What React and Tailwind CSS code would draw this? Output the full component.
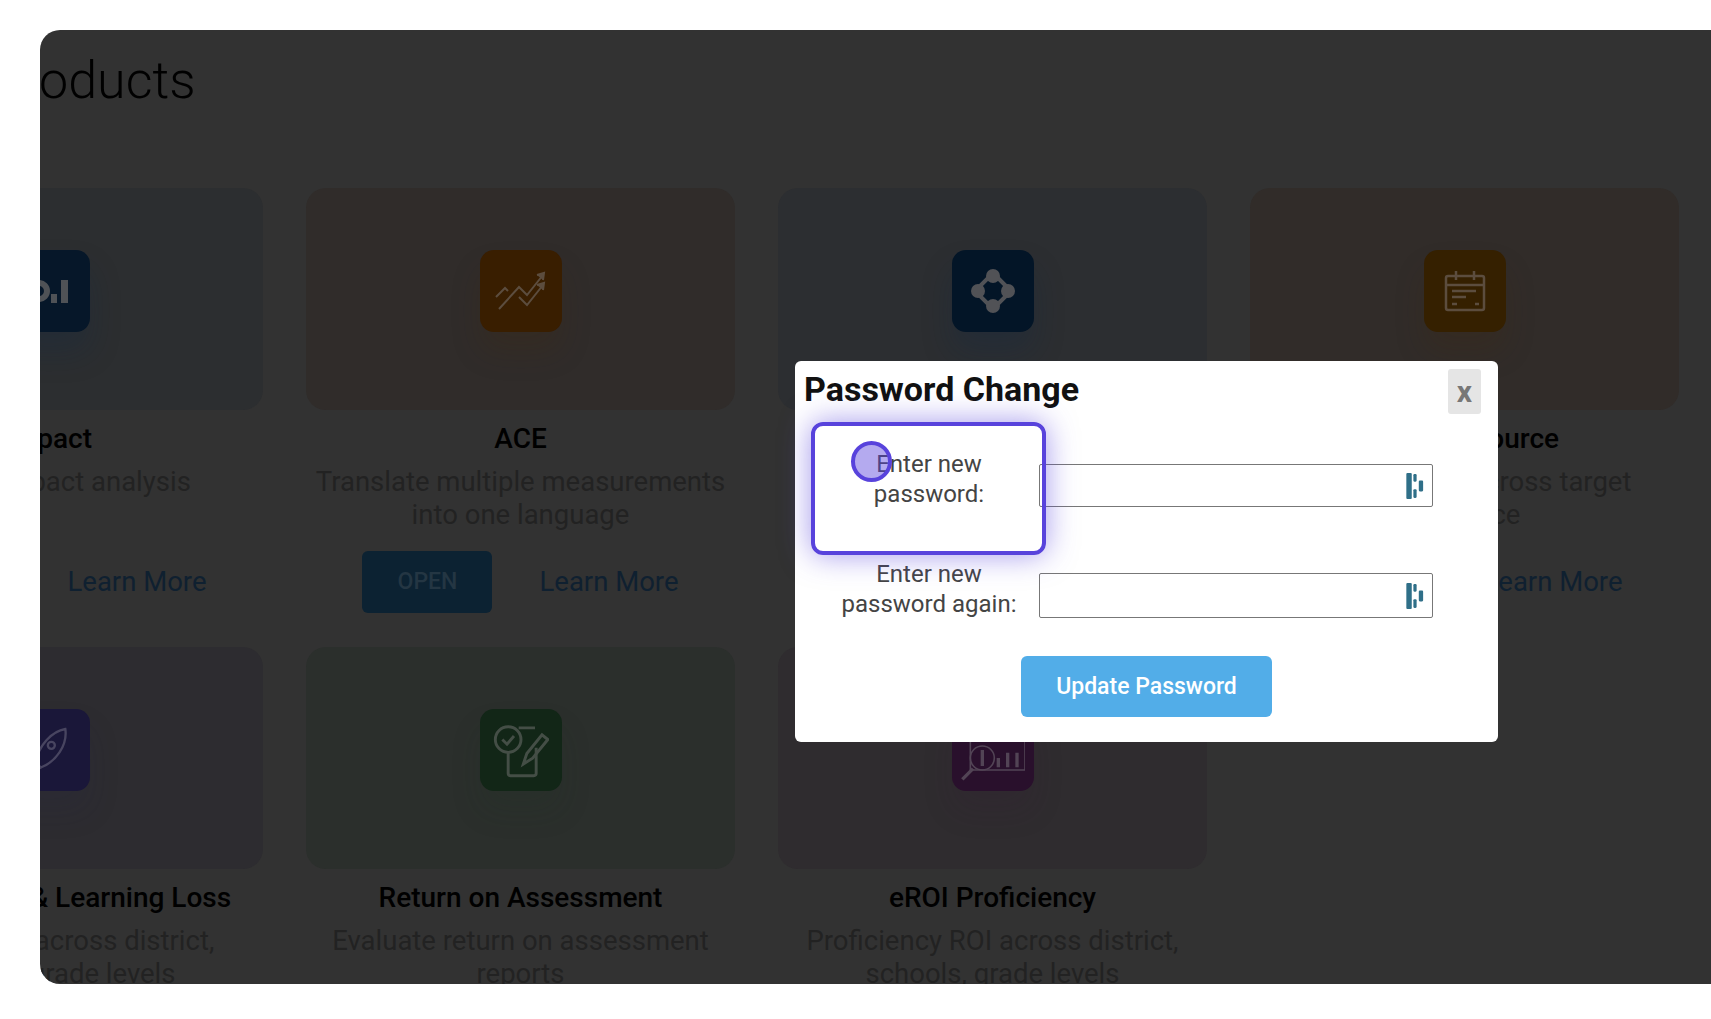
import React from 'react';

function ChartIcon() {
  return (
    <svg viewBox="0 0 48 48" className="h-12 w-12" fill="#4f5256">
      <circle cx="14" cy="24" r="8" fill="none" stroke="#4f5256" strokeWidth="6" />
      <rect x="26" y="27" width="6" height="9" />
      <rect x="36" y="13" width="7" height="23" />
    </svg>
  );
}

function TrendIcon() {
  return (
    <svg viewBox="0 0 56 48" className="h-12 w-14" fill="none" stroke="#5c4d3e" strokeWidth="2">
      <path d="M3 30l9-9 3 3" />
      <path d="M6 42l20-22 8 8 16-20" />
      <path d="M44 8l7-2-1 7" fill="#5c4d3e" />
      <path d="M26 30l8 8 16-20" />
      <path d="M44 18l7-2-1 7" fill="#5c4d3e" />
    </svg>
  );
}

function NodesIcon() {
  return (
    <svg viewBox="0 0 48 48" className="h-12 w-12" fill="#515256">
      <path d="M24 6L42 24 24 42 6 24Z" fill="none" stroke="#515256" strokeWidth="4" />
      <circle cx="24" cy="9" r="7" />
      <circle cx="39" cy="24" r="7" />
      <circle cx="24" cy="39" r="7" />
      <circle cx="9" cy="24" r="7" />
    </svg>
  );
}

function CalendarIcon() {
  return (
    <svg viewBox="0 0 48 48" className="h-12 w-12" fill="none" stroke="#5c4d3e" strokeWidth="2.5">
      <rect x="5" y="9" width="38" height="34" rx="2" />
      <path d="M5 18h38M15 4v9M33 4v9" />
      <path d="M11 24h24M11 30h14M11 37h5M34 37h4" />
    </svg>
  );
}

function RocketIcon() {
  return (
    <svg viewBox="0 0 48 48" className="h-14 w-14" fill="none" stroke="#484560" strokeWidth="2">
      <path d="M38 6C26 8 16 20 12 34l5 5C30 34 40 20 38 6Z" />
      <circle cx="26" cy="20" r="3" />
      <path d="M12 34l-5 8 3 1 7-4" />
    </svg>
  );
}

function CheckPenIcon() {
  return (
    <svg viewBox="0 0 48 48" className="h-14 w-14" fill="none" stroke="#444e46" strokeWidth="2.5">
      <circle cx="13" cy="15" r="11" />
      <path d="M8 15l4 4 6-7" />
      <path d="M13 26v18a2 2 0 002 2h20a2 2 0 002-2V22M22 5h14" />
      <path d="M26 36l3-9 13-16 5 4-13 16Z" />
    </svg>
  );
}

function ProficiencyIcon() {
  return (
    <svg viewBox="0 0 48 48" className="h-16 w-16" fill="none" stroke="#524455" strokeWidth="1.2">
      <path d="M7 10v29h41V10" />
      <circle cx="16" cy="30" r="9" />
      <path d="M9 38L1 46" strokeWidth="2.5" />
      <path d="M16 24v12M28 30v7M35 26v11M42 26v11" strokeWidth="2.5" />
    </svg>
  );
}

function VaultIcon() {
  return (
    <svg viewBox="0 0 16 24" className="h-[26px] w-[18px]" fill="#2f6f88">
      <rect x="0" y="0" width="5" height="24" rx="1" />
      <rect x="6.5" y="1" width="3" height="7" rx="1" />
      <rect x="6.5" y="15" width="3" height="8" rx="1" />
      <rect x="11.5" y="7" width="4" height="10" rx="1" />
    </svg>
  );
}

function ProductCard({ card, tile, shadow, icon, title, lines, open = true }) {
  return (
    <div className="flex flex-col items-center text-center">
      <div className={`flex h-[222px] w-full justify-center rounded-[20px] pt-[62px] ${card}`}>
        <div className={`flex h-[82px] w-[82px] items-center justify-center rounded-[14px] ${tile} ${shadow}`}>
          {icon}
        </div>
      </div>
      <div className="mt-[13px] h-8 text-[28px] leading-8 font-medium whitespace-nowrap text-black">{title}</div>
      <div className="mt-[10px] h-[66px] w-full text-[27.5px] leading-[33px] whitespace-nowrap text-[#222222]">
        {lines.map((line) => (
          <div key={line}>{line}</div>
        ))}
      </div>
      {open && (
        <div className="mt-[20px] flex items-center gap-[47px]">
          <button className="h-[62px] w-[130px] rounded-md bg-[#0c2232] text-[23px] font-medium text-[#243643]">OPEN</button>
          <span className="text-[27.5px] text-[#0f2030]">Learn More</span>
        </div>
      )}
    </div>
  );
}

export default function App() {
  return (
    <div className="relative h-[1019px] w-full overflow-hidden bg-white pt-[30px] pl-[40px] font-['Roboto',sans-serif]">
      <div className="h-[954px] overflow-hidden rounded-l-[20px] bg-[#323232]">
        <h1 className="-ml-[50px] pt-[21px] text-[52px] leading-[60px] font-light whitespace-nowrap text-black">Products</h1>
        <div className="-ml-[206px] mt-[77px] grid w-[1845px] grid-cols-[repeat(4,429px)] auto-rows-[459px] gap-x-[43px]">
          <ProductCard card="bg-[#2c2e30]" tile="bg-[#061729]" shadow="shadow-[0_20px_30px_rgba(10,40,70,0.25)]" icon={<ChartIcon />} title="Impact" lines={['Project impact analysis']} />
          <ProductCard card="bg-[#302c2a]" tile="bg-[#391e00]" shadow="shadow-[0_20px_30px_rgba(74,39,0,0.18)]" icon={<TrendIcon />} title="ACE" lines={['Translate multiple measurements', 'into one language']} />
          <ProductCard card="bg-[#2c2e31]" tile="bg-[#031527]" shadow="shadow-[0_20px_30px_rgba(10,40,70,0.25)]" icon={<NodesIcon />} title="" lines={[]} open={false} />
          <ProductCard card="bg-[#312c29]" tile="bg-[#352000]" shadow="shadow-[0_20px_30px_rgba(74,39,0,0.18)]" icon={<CalendarIcon />} title="Align Resource" lines={['Assess funds across target', 'guidance']} />
          <ProductCard card="bg-[#2d2c30]" tile="bg-[#1a1739]" shadow="shadow-[0_20px_30px_rgba(35,31,77,0.15)]" icon={<RocketIcon />} title="Acceleration & Learning Loss" lines={['Accelerated across district,', 'schools, grade levels']} />
          <ProductCard card="bg-[#2b2f2c]" tile="bg-[#122617]" shadow="shadow-[0_20px_30px_rgba(24,51,31,0.15)]" icon={<CheckPenIcon />} title="Return on Assessment" lines={['Evaluate return on assessment', 'reports']} />
          <ProductCard card="bg-[#2f2c2f]" tile="bg-[#29102c]" shadow="shadow-[0_20px_30px_rgba(55,21,57,0.15)]" icon={<ProficiencyIcon />} title="eROI Proficiency" lines={['Proficiency ROI across district,', 'schools, grade levels']} />
        </div>
      </div>

      {/* password dialog */}
      <div className="absolute top-[361px] left-[795px] h-[381px] w-[703px] rounded-md bg-white">
        <div className="flex items-start justify-between pt-[9px] pr-[17px] pl-[9px]">
          <h2 className="text-[34px] leading-[38px] font-bold text-[#111]">Password Change</h2>
          <button className="-mt-[1px] h-[45px] w-[33px] rounded-[3px] bg-[#e5e5e5] text-[30px] leading-[45px] font-bold text-[#777]">x</button>
        </div>
        <div className="mt-[36px] flex flex-col gap-[51px] pl-6">
          <div className="flex">
            <label className="h-[59px] w-[220px] text-center text-[24px] leading-[29.5px] text-[#444]">Enter new<br />password:</label>
            <div className="relative mt-[14px] h-[43px] w-[394px]">
              <input type="password" className="h-full w-full rounded-[2px] border border-[#777] bg-white" />
              <div className="absolute top-[9px] right-[9px]"><VaultIcon /></div>
            </div>
          </div>
          <div className="flex">
            <label className="h-[59px] w-[220px] text-center text-[24px] leading-[29.5px] text-[#444]">Enter new<br />password again:</label>
            <div className="relative mt-[13px] h-[45px] w-[394px]">
              <input type="password" className="h-full w-full rounded-[2px] border border-[#777] bg-white" />
              <div className="absolute top-[10px] right-[9px]"><VaultIcon /></div>
            </div>
          </div>
        </div>
        <button className="mx-auto mt-[37px] block h-[61px] w-[251px] rounded-md bg-[#52ade8] pt-[2px] text-[23px] font-medium text-white">Update Password</button>

        {/* tutorial highlight */}
        <div className="pointer-events-none absolute top-[61px] left-[16px] h-[133px] w-[235px] rounded-[12px] border-4 border-[#5843dc] shadow-[0_0_30px_rgba(88,67,220,0.55)]" />
        <div className="pointer-events-none absolute top-[80px] left-[56px] h-[41px] w-[41px] rounded-full border-4 border-[#5843dc] bg-[#5843dc]/45" />
      </div>
    </div>
  );
}
